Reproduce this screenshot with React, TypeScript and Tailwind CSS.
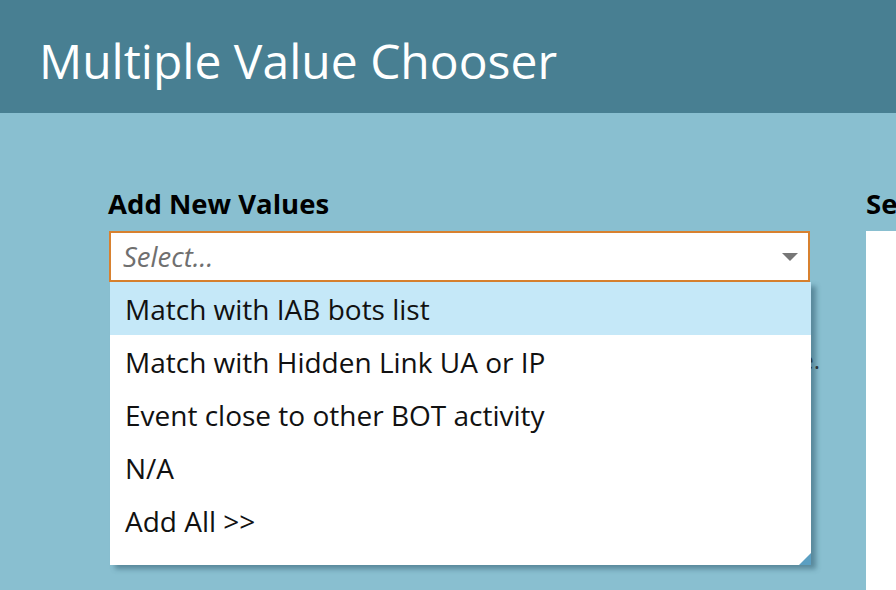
const options = [
  "Match with IAB bots list",
  "Match with Hidden Link UA or IP",
  "Event close to other BOT activity",
  "N/A",
  "Add All >>",
];

export default function App() {
  const font = { fontFamily: '"Open Sans", "Noto Sans", sans-serif' };

  return (
    <div className="w-[896px] h-[590px] overflow-hidden bg-[#89bfd0]" style={font}>
      {/* Title bar */}
      <div className="h-[113px] bg-[#487f92] pl-[39px] pt-[25px]">
        <h1 className="text-[48px] leading-normal text-white">Multiple Value Chooser</h1>
      </div>

      <div className="flex gap-[56px] pl-[108px] pt-[70px]">
        {/* Add new values */}
        <div className="w-[702px] shrink-0">
          <h2 className="text-[27.5px] leading-normal font-bold text-black">Add New Values</h2>
          <div className="relative mt-[7px]">
            <div className="h-[51px] ml-[1px] border-2 border-[#d8812f] bg-white flex items-center justify-between pl-[12px] pr-[10px]">
              <span className="text-[27.5px] italic text-[#6f6f6f]">Select...</span>
              <svg width="16" height="8" viewBox="0 0 16 8">
                <path d="M0 0 H16 L8 8 Z" fill="#777777" />
              </svg>
            </div>

            <p className="mt-[60px] w-[712px] text-right text-[24px] text-[#333]">
              Type or select values from the list above.
            </p>

            {/* Dropdown list */}
            <div className="absolute left-[2px] top-[51px] w-[701px] h-[283px] bg-white shadow-[5px_4px_5px_rgba(30,70,90,0.45)]">
              {options.map((o, i) => (
                <div
                  key={o}
                  className={`h-[53px] flex items-center pl-[15px] text-[28px] text-[#111] ${
                    i === 0 ? "bg-[#c5e8f8]" : ""
                  }`}
                >
                  {o}
                </div>
              ))}
              <svg className="absolute right-0 bottom-0" width="12" height="12" viewBox="0 0 12 12">
                <path d="M12 0 V12 H0 Z" fill="#5b9fc2" />
              </svg>
            </div>
          </div>
        </div>

        {/* Selected values */}
        <div className="flex-1 min-w-0">
          <h2 className="text-[27.5px] leading-normal font-bold text-black whitespace-nowrap">Selected Values</h2>
          <div className="mt-[7px] h-[400px] bg-white" />
        </div>
      </div>
    </div>
  );
}
